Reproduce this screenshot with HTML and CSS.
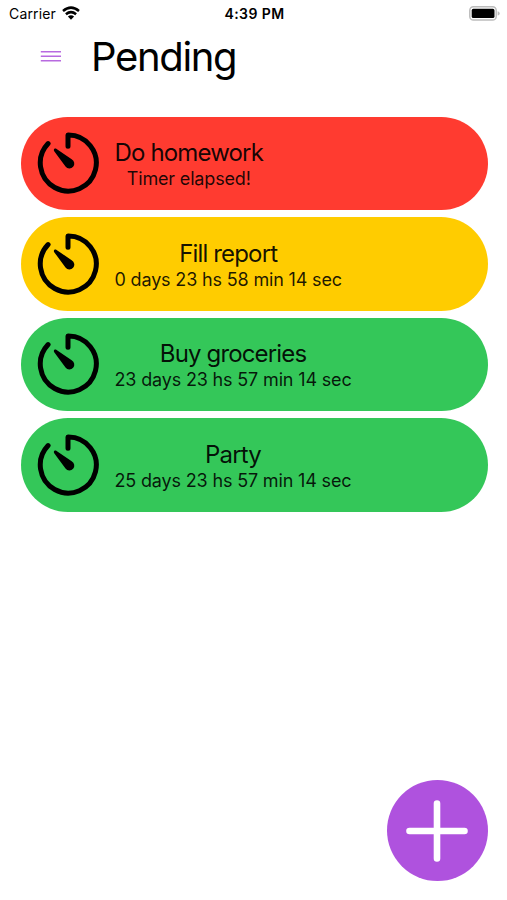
FILE: index.html
```html
<!DOCTYPE html>
<html lang="en">
<head>
<meta charset="utf-8">
<title>Pending</title>
<link rel="stylesheet" href="styles.css">
</head>
<body>
<svg class="defs" width="0" height="0" aria-hidden="true">
  <symbol id="timer" viewBox="0 0 62 62">
    <path d="M11.1 11.6A28 28 0 1 0 31 3V14.3" fill="none" stroke="currentColor" stroke-width="5" stroke-linecap="round" stroke-linejoin="round"/>
    <path d="M17.2 17C17.8 16.3 18.8 16.4 19.6 16.9L34.7 27.3A4.9 4.9 0 1 1 28.5 34.6L17.4 19.4C16.8 18.6 16.6 17.7 17.2 17Z" fill="currentColor"/>
  </symbol>
</svg>
<div class="screen">
  <div class="status">
    <div class="carrier"><span class="carrier-name">Carrier</span>
      <svg class="wifi" viewBox="0 0 18 14"><g fill="none" stroke="currentColor" stroke-width="2.5"><path d="M1 5Q9 -1.8 17 5"/><path d="M3.9 8.3Q9 4 14.1 8.3"/></g><path d="M5.9 10.4Q9 7.9 12.1 10.4L9 13.7Z" fill="currentColor"/></svg>
    </div>
    <span class="time">4:39 PM</span>
    <svg class="battery" viewBox="0 0 31 15"><rect x=".8" y=".8" width="26.4" height="13.2" rx="3.6" fill="#fff" stroke="#bcbcbc" stroke-width="1.5"/><rect x="2.7" y="2.8" width="22.8" height="9.2" rx="1.6"/><path d="M28.6 5.2Q30.7 5.7 30.7 7.4T28.6 9.6Z" fill="#bcbcbc"/></svg>
  </div>
  <header class="header">
    <svg class="menu" viewBox="0 0 21 13"><path d="M.8 1.7H21M.8 6.3H21M.8 10.8H21" stroke="#b86ae0" stroke-width="1.5"/></svg>
    <h1 class="title">Pending</h1>
  </header>
  <main class="list">
    <article class="card red"><svg class="timer"><use href="#timer"/></svg><div class="info"><h2 class="name">Do homework</h2><p class="left">Timer elapsed!</p></div></article>
    <article class="card yellow"><svg class="timer"><use href="#timer"/></svg><div class="info"><h2 class="name">Fill report</h2><p class="left">0 days 23 hs 58 min 14 sec</p></div></article>
    <article class="card green"><svg class="timer"><use href="#timer"/></svg><div class="info"><h2 class="name">Buy groceries</h2><p class="left">23 days 23 hs 57 min 14 sec</p></div></article>
    <article class="card green"><svg class="timer"><use href="#timer"/></svg><div class="info"><h2 class="name">Party</h2><p class="left">25 days 23 hs 57 min 14 sec</p></div></article>
  </main>
  <button class="add" aria-label="Add"><svg class="plus" viewBox="0 0 62 62"><path d="M31 3.5V58.5M3.5 31H58.5" stroke="#fff" stroke-width="6.6" stroke-linecap="round"/></svg></button>
</div>
</body>
</html>
```

FILE: styles.css
```css
* { box-sizing: border-box; }
body { margin: 0; background: #fff; color: #000; font-family: Inter, "Liberation Sans", sans-serif; }
h1, h2, p { margin: 0; font-weight: 400; white-space: nowrap; }
svg { display: block; flex: none; }
.defs { position: absolute; }
.screen { height: 900px; display: flex; flex-direction: column; }
.status { height: 26px; display: grid; grid-template-columns: 1fr auto 1fr; align-items: center; padding: 0 7px 0 9px; font-size: 14px; }
.carrier { display: flex; align-items: center; gap: 6px; }
.carrier-name { letter-spacing: 0.15px; }
.wifi { width: 18px; height: 14px; }
.time { font-weight: 600; letter-spacing: 0.4px; }
.battery { width: 31px; height: 15px; justify-self: end; }
.header { height: 60px; display: flex; align-items: center; padding-left: 40px; gap: 30px; }
.menu { width: 21px; height: 13px; }
.title { font-size: 40px; line-height: 60px; letter-spacing: -1.35px; padding-top: 2px; }
.list { display: flex; flex-direction: column; gap: 7.1px; padding: 30.5px 19.5px 0 20.5px; }
.card { height: 93.5px; border-radius: 47px; display: flex; align-items: center; padding-left: 16.5px; gap: 15.5px; }
.red { background: #ff3b30; }
.yellow { background: #ffcc00; }
.green { background: #34c759; }
.timer { width: 62px; height: 62px; }
.info { text-align: center; padding-top: 2.6px; }
.name { font-size: 24px; line-height: 28px; letter-spacing: -0.85px; color: rgba(0,0,0,.92); }
.left { font-size: 18px; line-height: 23px; letter-spacing: -0.16px; color: rgba(0,0,0,.88); }
.add { width: 101px; height: 101px; margin: auto 19.5px 19px auto; padding: 0; border: 0; border-radius: 50%; background: #af52de; display: flex; align-items: center; justify-content: center; }
.plus { width: 62px; height: 62px; }
```
